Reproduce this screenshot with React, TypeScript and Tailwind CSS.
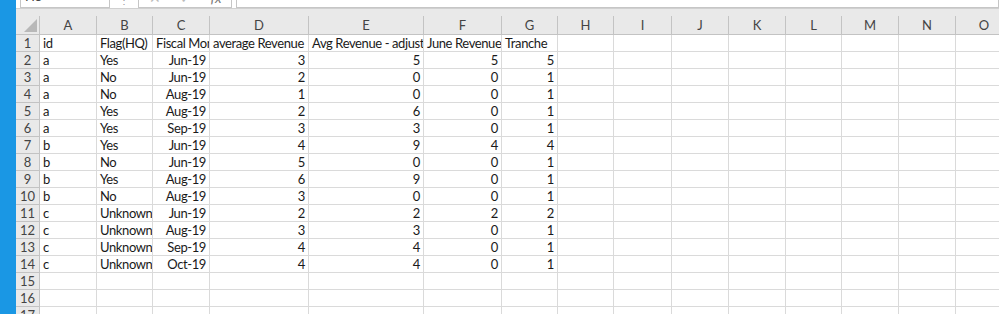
import React from "react";

const widths = [24, 57, 56, 57, 99, 115, 78, 56, 56, 58, 57, 57, 56, 57, 57, 57];
const letters = ["A", "B", "C", "D", "E", "F", "G", "H", "I", "J", "K", "L", "M", "N", "O"];

type Cell = { v: string; r?: boolean };
const t = (v: string): Cell => ({ v });
const n = (v: string): Cell => ({ v, r: true });

const rows: Cell[][] = [
  [t("id"), t("Flag(HQ)"), t("Fiscal Month"), t("average Revenue"), t("Avg Revenue - adjust"), t("June Revenue"), t("Tranche")],
  [t("a"), t("Yes"), n("Jun-19"), n("3"), n("5"), n("5"), n("5")],
  [t("a"), t("No"), n("Jun-19"), n("2"), n("0"), n("0"), n("1")],
  [t("a"), t("No"), n("Aug-19"), n("1"), n("0"), n("0"), n("1")],
  [t("a"), t("Yes"), n("Aug-19"), n("2"), n("6"), n("0"), n("1")],
  [t("a"), t("Yes"), n("Sep-19"), n("3"), n("3"), n("0"), n("1")],
  [t("b"), t("Yes"), n("Jun-19"), n("4"), n("9"), n("4"), n("4")],
  [t("b"), t("No"), n("Jun-19"), n("5"), n("0"), n("0"), n("1")],
  [t("b"), t("Yes"), n("Aug-19"), n("6"), n("9"), n("0"), n("1")],
  [t("b"), t("No"), n("Aug-19"), n("3"), n("0"), n("0"), n("1")],
  [t("c"), t("Unknown"), n("Jun-19"), n("2"), n("2"), n("2"), n("2")],
  [t("c"), t("Unknown"), n("Aug-19"), n("3"), n("3"), n("0"), n("1")],
  [t("c"), t("Unknown"), n("Sep-19"), n("4"), n("4"), n("0"), n("1")],
  [t("c"), t("Unknown"), n("Oct-19"), n("4"), n("4"), n("0"), n("1")],
  [],
  [],
  [],
];

const gridCols =
  "grid grid-cols-[24px_57px_56px_57px_99px_115px_78px_56px_56px_58px_57px_57px_56px_57px_57px_57px]";

export default function App() {
  return (
    <div
      className="flex h-[314px] w-[999px] overflow-hidden bg-white text-[#1a1a1a]"
      style={{ fontFamily: "Lato, 'Open Sans', sans-serif" }}
    >
      <div className="w-[16px] shrink-0 bg-[#1a97e4]" />
      <div className="flex min-w-0 flex-1 flex-col">
        {/* formula bar (cut off at top) */}
        <div className="h-[9px] shrink-0 overflow-hidden border-b border-[#d0d0d0] bg-white">
          <div className="-mt-[15px] flex h-[23px] items-stretch">
            <div className="ml-[4px] flex w-[90px] items-end border border-[#c6c6c6] bg-white pb-[4px] pl-[4px] text-[13px] leading-none text-[#444]">
              H5
            </div>
            <div className="flex w-[28px] items-end justify-center pb-[3px] text-[10px] leading-none text-[#999]">
              ⋮
            </div>
            <div className="flex w-[94px] items-end justify-around border border-[#c6c6c6] bg-white pb-[2px] text-[14px] leading-none text-[#bbb]">
              <span>✕</span>
              <span>✓</span>
              <span className="italic text-[#777]">fx</span>
            </div>
            <div className="ml-[4px] flex-1 border border-[#c6c6c6] bg-white" />
          </div>
        </div>
        <div className="h-[7px] shrink-0 bg-[#e9e9e9]" />
        {/* column header */}
        <div className={`${gridCols} h-[19px] shrink-0 bg-[#e9e9e9]`}>
          {widths.map((_, i) =>
            i === 0 ? (
              <div key={i} className="relative border-b border-r border-[#c3c3c3]">
                <svg className="absolute bottom-[2px] right-[2px]" width="13" height="13" viewBox="0 0 13 13">
                  <polygon points="13,0 13,13 0,13" fill="#b8b8b8" />
                </svg>
              </div>
            ) : (
              <div
                key={i}
                className="flex items-center justify-center border-b border-r border-[#c3c3c3] text-[13px] leading-none text-[#444]"
              >
                {letters[i - 1]}
              </div>
            )
          )}
        </div>
        {/* rows */}
        {rows.map((row, ri) => (
          <div key={ri} className={`${gridCols} h-[17px] shrink-0`}>
            <div className="flex items-center justify-center border-b border-r border-[#c3c3c3] bg-[#e9e9e9] text-[13px] leading-none text-[#444]">
              {ri + 1}
            </div>
            {letters.map((_, ci) => {
              const c = row[ci];
              return (
                <div
                  key={ci}
                  className={`flex items-center overflow-hidden whitespace-nowrap border-b border-r border-[#dadada] px-[3px] text-[13px] leading-none tracking-[-0.4px] ${
                    c && c.r ? "justify-end" : "justify-start"
                  }`}
                >
                  {c ? c.v : ""}
                </div>
              );
            })}
          </div>
        ))}
      </div>
    </div>
  );
}
